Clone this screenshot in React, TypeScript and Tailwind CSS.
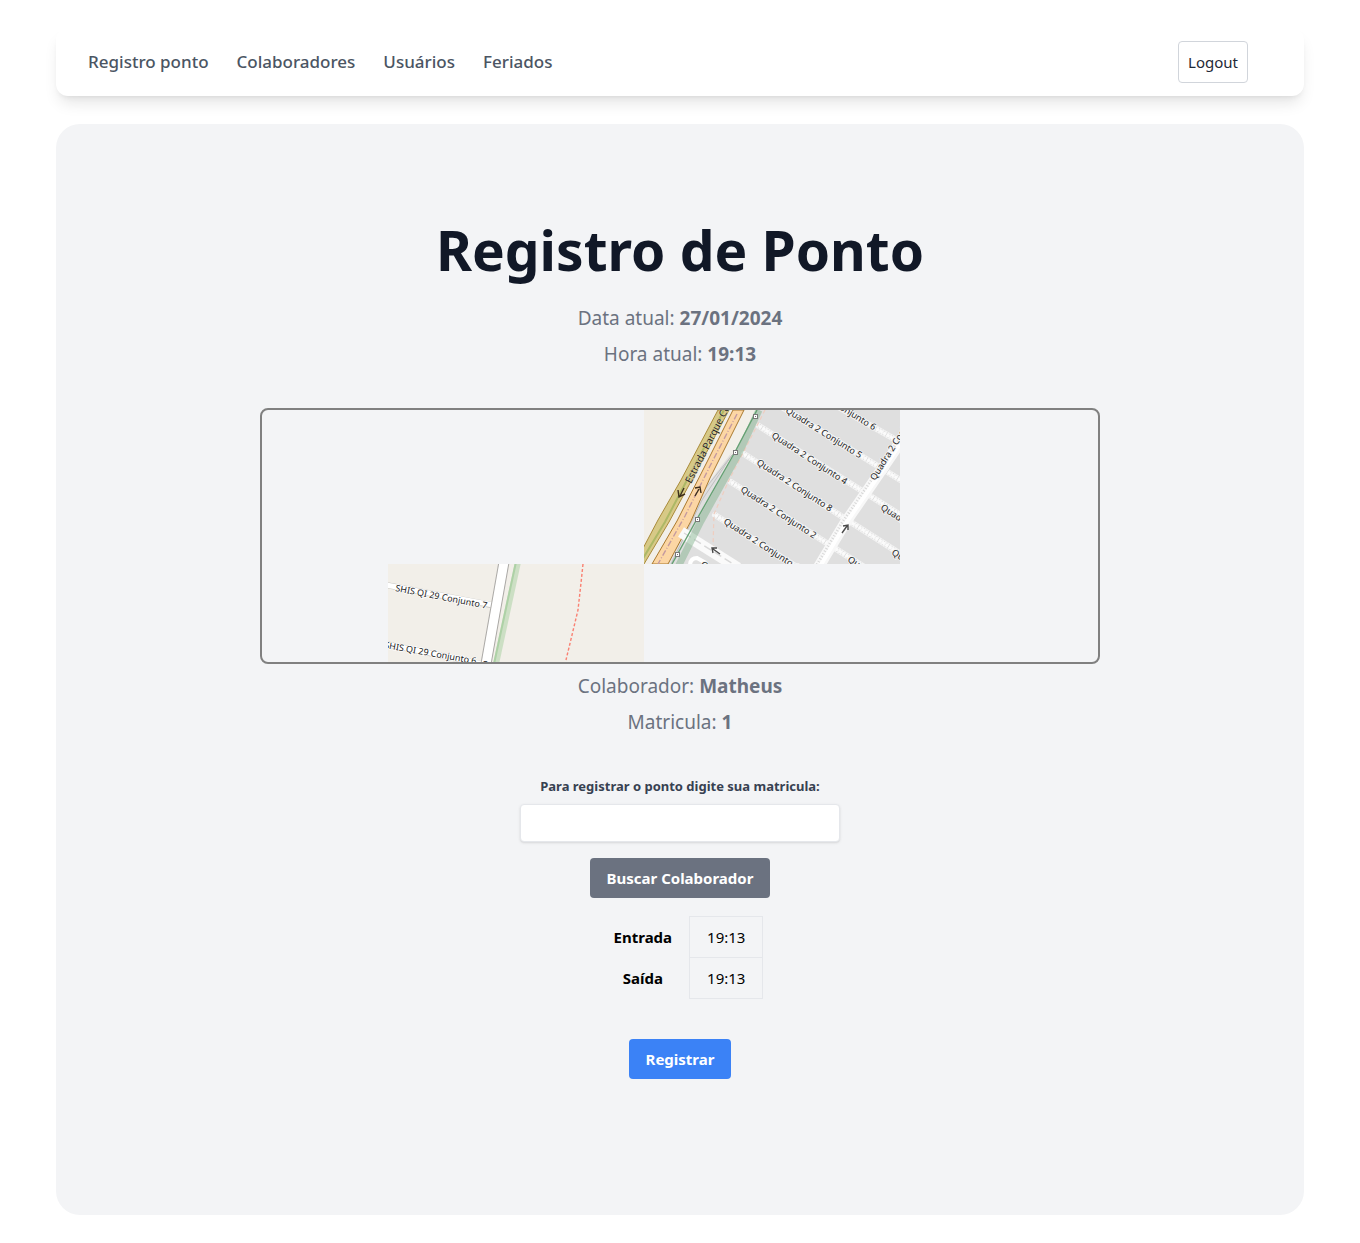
import { useState } from "react";

const links = ["Registro ponto", "Colaboradores", "Usuários", "Feriados"];

const streets: [number, number, number, number][] = [
  [800, 385, 910, 448],
  [772, 401, 910, 486],
  [759, 426, 910, 521],
  [744, 454, 910, 560],
  [731, 482, 880, 577],
  [715, 515, 830, 588],
];

const streetLabels: [number, number, number, string][] = [
  [799, 384, 32, "Quadra 2 Conjunto 6"],
  [785, 412, 32, "Quadra 2 Conjunto 5"],
  [771, 437, 33, "Quadra 2 Conjunto 4"],
  [756, 464, 33, "Quadra 2 Conjunto 8"],
  [740, 491, 33, "Quadra 2 Conjunto 2"],
  [723, 523, 33, "Quadra 2 Conjunto 1"],
  [880, 509, 33, "Quadra 2"],
  [891, 554, 33, "Quadra 2"],
  [847, 561, 33, "Quadra 2"],
];

const nodes: [number, number][] = [
  [755, 416],
  [735, 452],
  [697, 519],
  [677, 554],
];

function CityTile() {
  return (
    <g clipPath="url(#city-tile)">
      <rect x="644" y="410" width="256" height="154" fill="#f2efe9" />
      <path d="M757 410H900V564H662L700 515L731 458Z" fill="#dfdfdf" />
      <path d="M732 452L700 494L666 564H680L710 500Z" fill="#dfdfdf" />
      <path d="M733 454L696 500L667 564M732 455L702 500L671 564" fill="none" stroke="#b8b8b8" strokeWidth="0.8" />

      {streets.map(([x1, y1, x2, y2]) => (
        <g key={`${x1}-${y1}`}>
          <line x1={x1} y1={y1} x2={x2} y2={y2} stroke="#f4f4f4" strokeWidth="6" strokeLinecap="round" />
          <line x1={x1} y1={y1} x2={x2} y2={y2} stroke="#dedede" strokeWidth="5" strokeDasharray="1 2" />
          <line x1={x1} y1={y1} x2={x2} y2={y2} stroke="#fbfbfb" strokeWidth="3" strokeDasharray="3 1" />
        </g>
      ))}
      <path d="M908 431L865 494L845 523L818 568" fill="none" stroke="#f8f8f8" strokeWidth="11" />
      <path d="M905 431L862 494L842 523L815 568" fill="none" stroke="#d6d6d6" strokeWidth="3" strokeDasharray="1 2" />
      <path d="M909 431L866 494L846 523L819 568" fill="none" stroke="#ffffff" strokeWidth="4" />
      <path d="M765 410L743 453L729 480L714 514L713 547" fill="none" stroke="#efcdbf" strokeWidth="1.2" strokeDasharray="4 3" />

      <path d="M718 410L681 480L658 520L639 556V570L644 564L669 522L695 474L729 410Z" fill="#d7c986" stroke="#a98a3a" strokeWidth="1" />
      <path d="M724 410L686 482L665 522L642 560" fill="none" stroke="#adb866" strokeWidth="2" />
      <path d="M733 410L708 460L677 521L652 564H668L691 521L710 478L744 410Z" fill="#fcd6a4" stroke="#a9792f" strokeWidth="1" />
      <path d="M737 414L710 466L685 516L658 564" fill="none" stroke="#c49aa0" strokeWidth="1.4" strokeDasharray="6 2 1 2" />

      <path d="M681 532L738 568" fill="none" stroke="#fafafa" strokeWidth="11" />
      <path d="M684 533L738 567" fill="none" stroke="#d8d8d8" strokeWidth="1.4" strokeDasharray="8 4" />
      <path d="M690 566Q690 558 697 558L706 563" fill="none" stroke="#ffffff" strokeWidth="4" />

      <path d="M759 410L739 453L701 521L677 569" fill="none" stroke="#6fa87b" strokeOpacity="0.4" strokeWidth="7" />
      <path d="M757 410L735 452L697 519L672 564" fill="none" stroke="#65a173" strokeWidth="1.4" />
      {nodes.map(([x, y]) => (
        <g key={x}>
          <rect x={x - 1.5} y={y - 1.5} width="4" height="4" fill="#ffffff" stroke="#777777" strokeWidth="1" />
          <rect x={x} y={y} width="1" height="1" fill="#777777" />
        </g>
      ))}

      <g fill="none" stroke="#3d2f1d" strokeWidth="1.4">
        <path d="M684 488L680 496M678 490L679 497L685 494" />
        <path d="M695 496L699 489M695 488L700 487L701 493" />
      </g>
      <g fill="none" stroke="#4a4a4a" strokeWidth="1.4">
        <path d="M842 533L847 526M843 526L848 525L848 530" />
        <path d="M720 554L713 549M713 553L712 548L717 548" />
      </g>

      <g fontFamily='"Noto Sans", sans-serif' fill="#222222" stroke="#f4f4f4" strokeWidth="1.6" paintOrder="stroke">
        <g fontSize="9">
          {streetLabels.map(([x, y, angle, label]) => (
            <text key={`${x}-${y}`} transform={`translate(${x} ${y}) rotate(${angle})`}>
              {label}
            </text>
          ))}
          <text transform="translate(875 481) rotate(-58)">Quadra 2 Conjunto</text>
          <text transform="translate(700 566) rotate(33)">Quadra</text>
        </g>
        <text fontSize="10" stroke="#e2d4a0" strokeWidth="1" transform="translate(691 484) rotate(-63)">
          Estrada Parque Contorno
        </text>
      </g>
    </g>
  );
}

function LakeTile() {
  return (
    <g clipPath="url(#lake-tile)">
      <rect x="388" y="564" width="256" height="98" fill="#f2efe9" />
      <path d="M386 585L491 605M386 644L486 665" stroke="#c8c6c2" strokeWidth="6" />
      <path d="M386 585L493 605M386 644L488 665" stroke="#ffffff" strokeWidth="5" />
      <path d="M504 562L486 664" stroke="#aaa8a5" strokeWidth="11" />
      <path d="M504 562L486 664" stroke="#ffffff" strokeWidth="9" />
      <path d="M518 562L496 664" stroke="#ccdfc4" strokeWidth="6" />
      <path d="M516 562L494 664" stroke="#add1a6" strokeWidth="2" />
      <path d="M583 564L581 583L578 610L566 660" fill="none" stroke="#fa8072" strokeWidth="1.4" strokeDasharray="3 2" />
      <g fontFamily='"Noto Sans", sans-serif' fontSize="9" fill="#222222" stroke="#ffffff" strokeWidth="1.4" paintOrder="stroke">
        <text transform="translate(395 591) rotate(11)">SHIS QI 29 Conjunto 7</text>
        <text transform="translate(384 648) rotate(10)">SHIS QI 29 Conjunto 6</text>
        <text transform="translate(482 667) rotate(10)">S</text>
      </g>
    </g>
  );
}

function MapView() {
  return (
    <div className="mt-9 h-64 w-full max-w-[840px] overflow-hidden rounded-lg border-2 border-[#808080]">
      <svg
        className="block h-full w-full"
        viewBox="262 410 836 252"
        preserveAspectRatio="xMidYMid slice"
        role="img"
        aria-label="Mapa da localização"
      >
        <defs>
          <clipPath id="city-tile">
            <rect x="644" y="410" width="256" height="154" />
          </clipPath>
          <clipPath id="lake-tile">
            <rect x="388" y="564" width="256" height="98" />
          </clipPath>
        </defs>
        <CityTile />
        <LakeTile />
      </svg>
    </div>
  );
}

function Info({ label, value }: { label: string; value: string }) {
  return (
    <p className="text-[19px] leading-9 text-[#6b7280]">
      {label}: <strong className="font-bold">{value}</strong>
    </p>
  );
}

export default function App() {
  const [matricula, setMatricula] = useState("");

  return (
    <div className="bg-white px-14 py-7 font-['Noto_Sans',sans-serif] text-black">
      <header className="flex items-center justify-between rounded-xl bg-white py-[13px] pr-14 pl-8 shadow-lg">
        <nav className="flex gap-7">
          {links.map((link) => (
            <a key={link} href="#" className="text-[17px] leading-7 font-medium text-[#4b5563]">
              {link}
            </a>
          ))}
        </nav>
        <button type="button" className="rounded-sm border border-[#d1d5db] px-[9px] py-2 text-[15px] leading-6 text-[#1f2937]">
          Logout
        </button>
      </header>

      <main className="mt-7 flex flex-col items-center rounded-3xl bg-[#f3f4f6] px-8 pt-24 pb-[136px]">
        <h1 className="mb-5 text-center text-[55px] leading-[60px] font-bold text-[#111827]">Registro de Ponto</h1>
        <Info label="Data atual" value="27/01/2024" />
        <Info label="Hora atual" value="19:13" />

        <MapView />

        <div className="mt-1 text-center">
          <Info label="Colaborador" value="Matheus" />
          <Info label="Matricula" value="1" />
        </div>

        <form className="mt-9 flex w-full flex-col items-center" onSubmit={(event) => event.preventDefault()}>
          <label htmlFor="matricula" className="text-[13px] leading-5 font-bold text-[#374151]">
            Para registrar o ponto digite sua matricula:
          </label>
          <input
            id="matricula"
            type="text"
            value={matricula}
            onChange={(event) => setMatricula(event.target.value)}
            className="mt-2 w-full max-w-80 rounded-sm border border-[#e5e7eb] bg-white px-3 py-2 text-sm leading-5 text-[#374151] shadow-sm"
          />
          <button type="button" className="mt-4 rounded-sm bg-[#6b7280] px-[17px] py-2 text-[15px] leading-6 font-bold text-white">
            Buscar Colaborador
          </button>

          <table className="mt-[18px] border-collapse text-center text-[15px] leading-6">
            <tbody>
              <tr>
                <th scope="row" className="px-[17px] py-2 font-bold">Entrada</th>
                <td className="border border-[#e5e7eb] px-[17px] py-2">19:13</td>
              </tr>
              <tr>
                <th scope="row" className="px-[17px] py-2 font-bold">Saída</th>
                <td className="border border-[#e5e7eb] px-[17px] py-2">19:13</td>
              </tr>
            </tbody>
          </table>

          <button type="submit" className="mt-10 rounded-sm bg-[#3b82f6] px-[17px] py-2 text-[15px] leading-6 font-bold text-white">
            Registrar
          </button>
        </form>
      </main>
    </div>
  );
}
